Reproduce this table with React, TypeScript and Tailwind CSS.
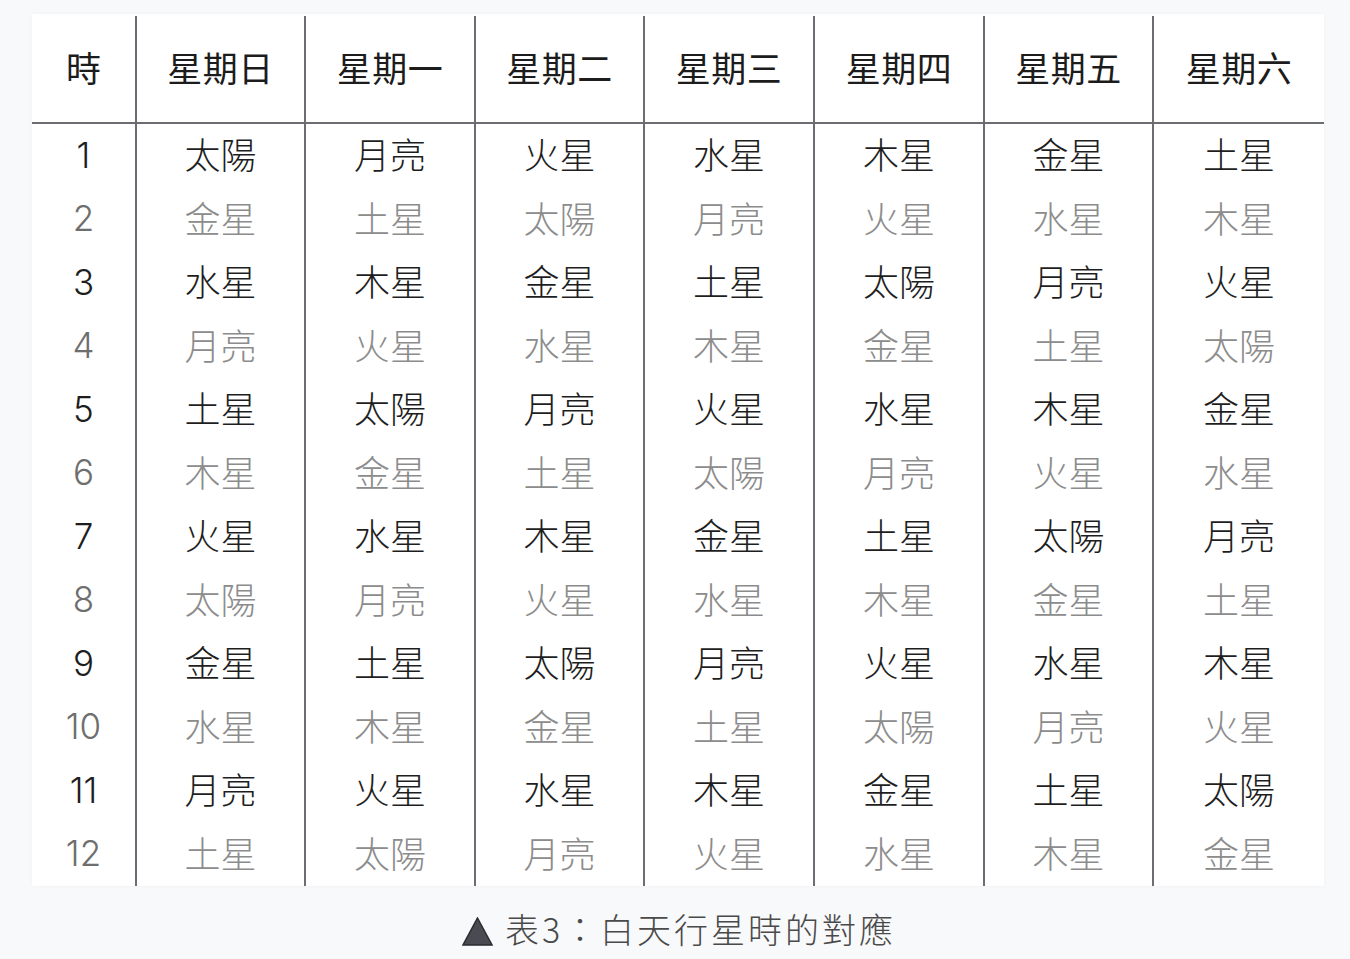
const days = ['星期日', '星期一', '星期二', '星期三', '星期四', '星期五', '星期六'];

// 每一列：時 1–12，星期日 → 星期六
const rows: string[][] = [
  ['太陽', '月亮', '火星', '水星', '木星', '金星', '土星'],
  ['金星', '土星', '太陽', '月亮', '火星', '水星', '木星'],
  ['水星', '木星', '金星', '土星', '太陽', '月亮', '火星'],
  ['月亮', '火星', '水星', '木星', '金星', '土星', '太陽'],
  ['土星', '太陽', '月亮', '火星', '水星', '木星', '金星'],
  ['木星', '金星', '土星', '太陽', '月亮', '火星', '水星'],
  ['火星', '水星', '木星', '金星', '土星', '太陽', '月亮'],
  ['太陽', '月亮', '火星', '水星', '木星', '金星', '土星'],
  ['金星', '土星', '太陽', '月亮', '火星', '水星', '木星'],
  ['水星', '木星', '金星', '土星', '太陽', '月亮', '火星'],
  ['月亮', '火星', '水星', '木星', '金星', '土星', '太陽'],
  ['土星', '太陽', '月亮', '火星', '水星', '木星', '金星'],
];

const cjk = "font-['Noto_Sans_CJK_TC','Noto_Sans_CJK_SC',sans-serif]";
const cols = 'grid grid-cols-[103px_169px_170px_169px_170px_170px_169px_1fr]';

export default function App() {
  return (
    <div className="w-[1350px] h-[959px] bg-[#f8f9fb] pt-[14px] pl-[32px] overflow-hidden">
      <div className="w-[1292px] bg-white shadow-[0_0_4px_rgba(0,0,0,0.04)]">
        {/* header */}
        <div className={`${cols} h-[110px] border-b-2 border-[#6b6d73]`}>
          <div className={`${cjk} flex items-center justify-center pb-[2px] text-[35px] font-normal text-[#1c1c1c]`}>
            時
          </div>
          {days.map((d) => (
            <div
              key={d}
              className={`${cjk} mt-[2px] flex items-center justify-center pb-[4px] border-l-2 border-[#6b6d73] text-[35px] font-normal text-[#1c1c1c] tracking-[0.5px]`}
            >
              {d}
            </div>
          ))}
        </div>

        {/* body */}
        {rows.map((r, i) => {
          const dim = i % 2 === 1;
          const color = dim ? 'text-[#8c8c8c]' : 'text-[#1e1e1e]';
          return (
            <div key={i} className={`${cols} h-[63.5px]`}>
              <div
                className={`font-['Inter',sans-serif] flex items-center justify-center pb-[2px] text-[35px] font-light ${
                  dim ? 'text-[#6e6e6e]' : 'text-[#1e1e1e]'
                }`}
              >
                {i + 1}
              </div>
              {r.map((p, j) => (
                <div
                  key={j}
                  className={`${cjk} flex items-center justify-center pb-[5px] border-l-2 border-[#6b6d73] text-[36px] font-light ${color}`}
                >
                  {p}
                </div>
              ))}
            </div>
          );
        })}
      </div>

      <div className="w-[1292px] flex items-center justify-center pt-[30px] pl-[2px]">
        <svg width="31" height="29" viewBox="0 0 31 29" className="mr-[12px]">
          <polygon points="15.5,1 30,28 1,28" fill="#4a4a52" stroke="#2a2a30" strokeWidth="1.5" />
        </svg>
        <span className={`${cjk} text-[34px] font-light text-[#4a4a4a] leading-none tracking-[3px] -mt-[4px]`}>
          表3：白天行星時的對應
        </span>
      </div>
    </div>
  );
}
